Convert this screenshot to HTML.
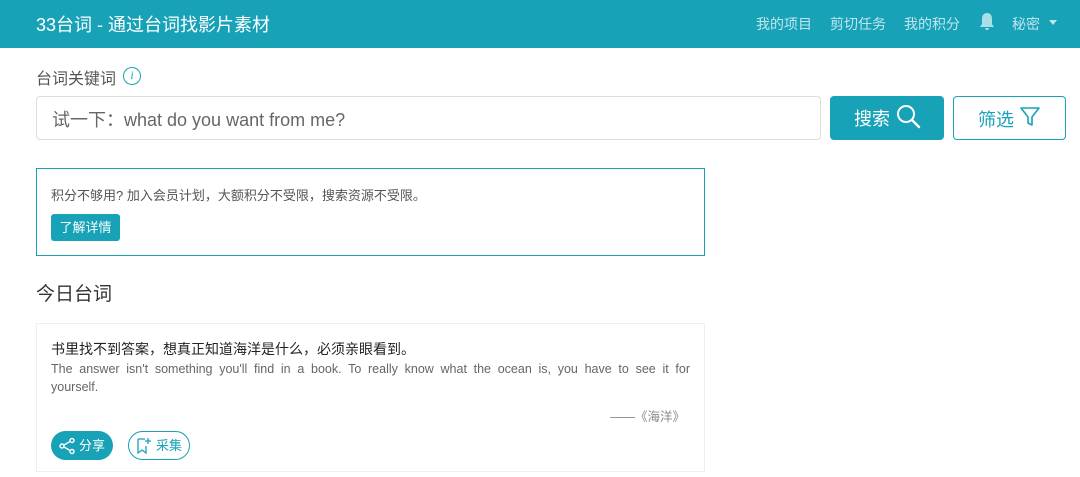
<!DOCTYPE html>
<html><head><meta charset="utf-8"><style>
*{box-sizing:border-box;margin:0;padding:0}
body{width:1080px;height:477px;overflow:hidden;background:#fff;font-family:"Liberation Sans","Noto Sans CJK SC",sans-serif;color:#333;position:relative}
.hdr{position:absolute;left:0;top:0;width:1080px;height:48px;background:#17a2b8}
.title{position:absolute;left:36px;top:11px;font-size:18px;color:#fff}
.nav{position:absolute;top:14px;font-size:14px;color:#bfe6ec}
.abs{position:absolute}
</style></head><body>
<div class="hdr">
<div class="title">33台词 - 通过台词找影片素材</div>
<div class="nav" style="left:756px">我的项目</div>
<div class="nav" style="left:830px">剪切任务</div>
<div class="nav" style="left:904px">我的积分</div>
<svg class="abs" style="left:979px;top:12px" width="16" height="20" viewBox="0 0 16 20"><path d="M8 1c-3 0-5 2-5 6v5l-2 3h14l-2-3V7c0-4-2-6-5-6z M6 16a2 2 0 0 0 4 0z" fill="#a8e0e8"/></svg>
<div class="nav" style="left:1012px">秘密</div>
<div class="abs" style="left:1049px;top:20px;border-left:4px solid transparent;border-right:4px solid transparent;border-top:5px solid #bfe6ec"></div>
</div>
<div class="abs" style="left:36px;top:65px;font-size:16px;color:#555">台词关键词</div>
<div class="abs" style="left:123px;top:67px;width:18px;height:18px;border:1.5px solid #17a2b8;border-radius:50%;color:#17a2b8;font-size:12px;font-style:italic;text-align:center;line-height:15px;font-family:'Liberation Serif',serif">i</div>
<div class="abs" style="left:36px;top:96px;width:785px;height:44px;border:1px solid #ddd;border-radius:4px;font-size:18px;color:#666;padding:9px 0 0 15px">试一下：what do you want from me?</div>
<div class="abs" style="left:830px;top:96px;width:114px;height:44px;background:#17a2b8;border-radius:4px;color:#fff;font-size:18px;padding:9px 0 0 24px">搜索</div>
<svg class="abs" style="left:896px;top:104px" width="26" height="26" viewBox="0 0 26 26"><circle cx="10" cy="10" r="8" stroke="#fff" stroke-width="2" fill="none"/><path d="M16 16l7 7" stroke="#fff" stroke-width="2.4" stroke-linecap="round"/></svg>
<div class="abs" style="left:953px;top:96px;width:113px;height:44px;border:1px solid #17a2b8;border-radius:4px;color:#17a2b8;font-size:18px;padding:9px 0 0 24px">筛选</div>
<svg class="abs" style="left:1019px;top:106px" width="22" height="22" viewBox="0 0 22 22"><path d="M2 2h18l-7 9v8l-4-2v-6z" stroke="#17a2b8" stroke-width="1.6" fill="none" stroke-linejoin="round"/></svg>
<div class="abs" style="left:36px;top:168px;width:669px;height:88px;border:1px solid #17a2b8"></div>
<div class="abs" style="left:51px;top:185px;font-size:13px;color:#555">积分不够用? 加入会员计划，大额积分不受限，搜索资源不受限。</div>
<div class="abs" style="left:51px;top:214px;width:69px;height:27px;background:#17a2b8;border-radius:3px;color:#fff;font-size:13px;text-align:center;line-height:27px">了解详情</div>
<div class="abs" style="left:36px;top:279px;font-size:19px;color:#333">今日台词</div>
<div class="abs" style="left:36px;top:323px;width:669px;height:149px;border:1px solid #eee"></div>
<div class="abs" style="left:51px;top:339px;font-size:14px;color:#222">书里找不到答案，想真正知道海洋是什么，必须亲眼看到。</div>
<div class="abs" style="left:51px;top:360px;width:639px;font-size:12.5px;color:#666;line-height:18px;text-align:justify;text-align-last:justify">The answer isn't something you'll find in a book. To really know what the ocean is, you have to see it for</div>
<div class="abs" style="left:51px;top:378px;font-size:12.5px;color:#666;line-height:18px">yourself.</div>
<div class="abs" style="left:610px;top:406px;font-size:12.5px;color:#888">——《海洋》</div>
<div class="abs" style="left:51px;top:431px;width:62px;height:29px;background:#17a2b8;border-radius:15px;color:#fff;font-size:13px;line-height:29px;padding-left:28px">分享</div>
<svg class="abs" style="left:58px;top:437px" width="18" height="18" viewBox="0 0 18 18"><g stroke="#fff" stroke-width="1.4" fill="none"><circle cx="14" cy="3.5" r="2"/><circle cx="4" cy="9" r="2"/><circle cx="14" cy="14.5" r="2"/><path d="M6 8l6-3.5M6 10l6 3.5"/></g></svg>
<div class="abs" style="left:128px;top:431px;width:62px;height:29px;border:1px solid #17a2b8;border-radius:15px;color:#17a2b8;font-size:13px;line-height:27px;padding-left:27px">采集</div>
<svg class="abs" style="left:136px;top:437px" width="16" height="18" viewBox="0 0 16 18"><path d="M2 2h7M2 2v14l4-3 4 3v-7M12 1v6M9 4h6" stroke="#17a2b8" stroke-width="1.3" fill="none"/></svg>
</body></html>
